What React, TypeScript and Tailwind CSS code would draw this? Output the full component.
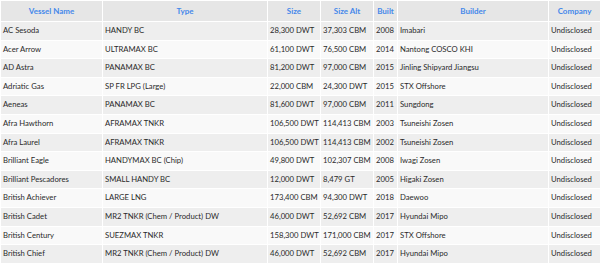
import React from "react";

const rows: string[][] = [
  ["AC Sesoda", "HANDY BC", "28,300 DWT", "37,303 CBM", "2008", "Imabari", "Undisclosed"],
  ["Acer Arrow", "ULTRAMAX BC", "61,100 DWT", "76,500 CBM", "2014", "Nantong COSCO KHI", "Undisclosed"],
  ["AD Astra", "PANAMAX BC", "81,200 DWT", "97,000 CBM", "2015", "Jinling Shipyard Jiangsu", "Undisclosed"],
  ["Adriatic Gas", "SP FR LPG (Large)", "22,000 CBM", "24,300 DWT", "2015", "STX Offshore", "Undisclosed"],
  ["Aeneas", "PANAMAX BC", "81,600 DWT", "97,000 CBM", "2011", "Sungdong", "Undisclosed"],
  ["Afra Hawthorn", "AFRAMAX TNKR", "106,500 DWT", "114,413 CBM", "2003", "Tsuneishi Zosen", "Undisclosed"],
  ["Afra Laurel", "AFRAMAX TNKR", "106,500 DWT", "114,413 CBM", "2002", "Tsuneishi Zosen", "Undisclosed"],
  ["Brilliant Eagle", "HANDYMAX BC (Chip)", "49,800 DWT", "102,307 CBM", "2008", "Iwagi Zosen", "Undisclosed"],
  ["Brilliant Pescadores", "SMALL HANDY BC", "12,000 DWT", "8,479 GT", "2005", "Higaki Zosen", "Undisclosed"],
  ["British Achiever", "LARGE LNG", "173,400 CBM", "94,300 DWT", "2018", "Daewoo", "Undisclosed"],
  ["British Cadet", "MR2 TNKR (Chem / Product) DW", "46,000 DWT", "52,692 CBM", "2017", "Hyundai Mipo", "Undisclosed"],
  ["British Century", "SUEZMAX TNKR", "158,300 DWT", "171,000 CBM", "2017", "STX Offshore", "Undisclosed"],
  ["British Chief", "MR2 TNKR (Chem / Product) DW", "46,000 DWT", "52,692 CBM", "2017", "Hyundai Mipo", "Undisclosed"],
];

const headers = ["Vessel Name", "Type", "Size", "Size Alt", "Built", "Builder", "Company"];
const widths = [102, 165, 53, 53, 24, 151, 52];

export default function App() {
  return (
    <div className="w-[600px] h-[263px] overflow-hidden bg-white" style={{ fontFamily: "Lato, sans-serif" }}>
      <table className="w-[600px] table-fixed border-collapse text-[7.7px] text-[#2a2a2a]">
        <colgroup>
          {widths.map((w, i) => (
            <col key={i} style={{ width: w }} />
          ))}
        </colgroup>
        <thead>
          <tr className="h-[21px] bg-[#e6e6e6]">
            {headers.map((h) => (
              <th key={h} className="border border-white text-center font-bold text-[8px] text-[#4588ea] p-0 whitespace-nowrap overflow-hidden">
                {h}
              </th>
            ))}
          </tr>
        </thead>
        <tbody>
          {rows.map((r, i) => (
            <tr key={i} className={`h-[18.6px] ${i % 2 === 0 ? "bg-[#eeeeee]" : "bg-[#f9f9f9]"}`}>
              {r.map((c, j) => (
                <td key={j} className="border border-white pl-[2px] pr-0 py-0 whitespace-nowrap overflow-hidden">
                  {c}
                </td>
              ))}
            </tr>
          ))}
        </tbody>
      </table>
    </div>
  );
}
